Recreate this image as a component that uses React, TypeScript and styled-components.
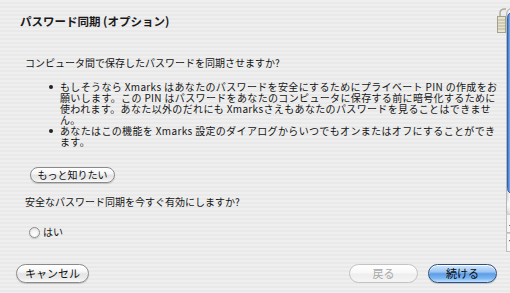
import React from "react";
import styled, { createGlobalStyle, css } from "styled-components";

const FONT = `"Noto Sans CJK JP", "Noto Sans", sans-serif`;

const Global = createGlobalStyle`
  html, body { margin: 0; padding: 0; height: 100%; }
  body {
    background: repeating-linear-gradient(to bottom, #efefef 0px, #efefef 2px, #e9e9e9 2px, #e9e9e9 4px);
    font-family: ${FONT};
    color: #151515;
  }
  #root { height: 100%; }
`;

const Window = styled.div`
  width: 510px;
  height: 293px;
  display: flex;
  flex-direction: column;
`;

const Body = styled.div`
  height: 252px;
  display: flex;
  padding-right: 22px;
`;

const Content = styled.div`
  flex: 1;
  display: flex;
  flex-direction: column;
  align-items: flex-start;
  padding: 14px 0 0 20px;
`;

const Title = styled.h1`
  margin: 0;
  font-size: 11.5px;
  line-height: 14px;
  font-weight: 700;
  color: #1a1a1a;
  white-space: nowrap;
`;

const Paragraph = styled.p<{ $top: number }>`
  margin: ${(p) => p.$top}px 0 0 5px;
  font-size: 10px;
  line-height: 11px;
  white-space: nowrap;
`;

const BulletList = styled.ul`
  list-style: none;
  margin: 13px 0 0 28px;
  padding: 0;
  display: flex;
  flex-direction: column;
`;

const BulletItem = styled.li`
  display: flex;
  font-size: 10px;
  line-height: 11px;
`;

const Dot = styled.span`
  width: 12px;
  flex: none;
  display: flex;
  justify-content: flex-start;
  padding-left: 1px;
  padding-top: 4px;
  box-sizing: border-box;
  &::after {
    content: "";
    width: 4px;
    height: 4px;
    border-radius: 50%;
    background: #222;
  }
`;

const BulletText = styled.span`
  white-space: nowrap;
  letter-spacing: 0.35px;
`;

type Variant = "normal" | "primary" | "disabled";

const PillButton = styled.button<{ $variant?: Variant; $w: number; $h: number; $size: number }>`
  width: ${(p) => p.$w}px;
  height: ${(p) => p.$h}px;
  border-radius: ${(p) => p.$h / 2}px;
  font-family: ${FONT};
  font-size: ${(p) => p.$size}px;
  line-height: 1;
  padding: 0;
  display: flex;
  align-items: center;
  justify-content: center;
  color: #111;
  border: 1px solid #8a8a8a;
  background: linear-gradient(to bottom, #ffffff 0%, #f6f6f6 40%, #e4e4e4 52%, #ececec 80%, #fbfbfb 100%);
  box-shadow: 0 1px 1px rgba(0, 0, 0, 0.18), inset 0 1px 0 rgba(255, 255, 255, 0.9);
  ${(p) =>
    p.$variant === "primary" &&
    css`
      border-color: #2f4f80;
      background: linear-gradient(to bottom, #d4e8fd 0%, #9cc6f3 40%, #5d9de8 52%, #7ab5f1 78%, #c4e1ff 100%);
      color: #0d0d0d;
    `}
  ${(p) =>
    p.$variant === "disabled" &&
    css`
      border-color: #c3c3c3;
      color: #a9a9a9;
      background: linear-gradient(to bottom, #ffffff 0%, #f8f8f8 45%, #eeeeee 55%, #f5f5f5 100%);
      box-shadow: none;
    `}
`;

const SmallButton = styled(PillButton)`
  margin: 20px 0 0 10px;
`;

const RadioRow = styled.label`
  margin: 19px 0 0 9px;
  display: flex;
  align-items: center;
  gap: 3px;
  font-size: 10px;
  line-height: 12px;
`;

const RadioCircle = styled.span`
  width: 11px;
  height: 11px;
  border-radius: 50%;
  border: 1px solid #8e8e8e;
  box-sizing: border-box;
  background: radial-gradient(circle at 50% 70%, #ffffff 0%, #f2f2f2 50%, #d8d8d8 100%);
  box-shadow: 0 1px 1px rgba(0, 0, 0, 0.15);
`;

const Grip = styled.div`
  width: 9px;
  margin-top: 8px;
  display: flex;
  align-items: flex-start;
`;

const Scrollbar = styled.div`
  width: 12px;
  margin-top: 8px;
  display: flex;
  flex-direction: column;
`;

const Track = styled.div`
  flex: 1;
  display: flex;
  flex-direction: column;
  align-items: center;
  background: linear-gradient(to right, #d6d6d6 0%, #f6f6f6 25%, #ffffff 50%, #f6f6f6 75%, #d6d6d6 100%);
  border: 1px solid #b9b9b9;
  border-bottom: none;
  border-radius: 6px 6px 0 0;
  box-sizing: border-box;
  padding-top: 3px;
`;

const Thumb = styled.div`
  width: 11px;
  height: 182px;
  border-radius: 6px;
  border: 1px solid #2f63b0;
  box-sizing: border-box;
  background: linear-gradient(to right, #3b78cf 0%, #7fb2ef 22%, #b3d6fb 45%, #a6cdf8 60%, #6fa6ea 80%, #3a76cd 100%);
`;

const TrackEnd = styled.div`
  margin-top: auto;
  width: 10px;
  height: 16px;
  border-radius: 0 0 5px 5px;
  background: linear-gradient(to bottom, rgba(255, 255, 255, 0) 0%, #fafafa 40%, #e0e0e0 100%);
  box-shadow: 0 1px 1px rgba(0, 0, 0, 0.12);
`;

const ArrowButton = styled.div`
  height: 19px;
  border: 1px solid #bdbdbd;
  border-top-color: #cfcfcf;
  box-sizing: border-box;
  background: linear-gradient(to right, #f2f2f2, #ffffff 50%, #f2f2f2);
  display: flex;
  align-items: center;
  justify-content: center;
`;

const Footer = styled.div`
  flex: 1;
  display: flex;
  align-items: flex-start;
  padding: 12px 13px 0 16px;
  gap: 10px;
`;

const Spacer = styled.div`
  flex: 1;
`;

const Triangle = ({ up }: { up: boolean }) => (
  <svg width="6" height="5" viewBox="0 0 6 5">
    <polygon points={up ? "3,0 6,5 0,5" : "0,0 6,0 3,5"} fill="#3a3a3a" />
  </svg>
);

const GripIcon = () => (
  <svg width="9" height="26" viewBox="0 0 9 26">
    <path d="M3 8 V5 Q3 1.5 7 1 L9 1" fill="none" stroke="#a9a99a" strokeWidth="1.4" />
    <rect x="0.5" y="8.5" width="8" height="16" fill="#e7e3cc" stroke="#a4a28e" />
    <line x1="1" y1="12" x2="8" y2="12" stroke="#b9b59c" />
    <line x1="1" y1="15" x2="8" y2="15" stroke="#b9b59c" />
    <line x1="1" y1="18" x2="8" y2="18" stroke="#b9b59c" />
    <line x1="1" y1="21" x2="8" y2="21" stroke="#b9b59c" />
  </svg>
);

export default function App() {
  return (
    <>
      <Global />
      <Window>
        <Body>
          <Content>
            <Title>パスワード同期 (オプション)</Title>
            <Paragraph $top={29}>コンピュータ間で保存したパスワードを同期させますか?</Paragraph>
            <BulletList>
              <BulletItem>
                <Dot />
                <BulletText>
                  もしそうなら Xmarks はあなたのパスワードを安全にするためにプライベート PIN の作成をお
                  <br />
                  願いします。この PIN はパスワードをあなたのコンピュータに保存する前に暗号化するために
                  <br />
                  使われます。あなた以外のだれにも Xmarksさえもあなたのパスワードを見ることはできませ
                  <br />
                  ん。
                </BulletText>
              </BulletItem>
              <BulletItem>
                <Dot />
                <BulletText>
                  あなたはこの機能を Xmarks 設定のダイアログからいつでもオンまたはオフにすることができ
                  <br />
                  ます。
                </BulletText>
              </BulletItem>
            </BulletList>
            <SmallButton $w={85} $h={16} $size={10}>
              もっと知りたい
            </SmallButton>
            <Paragraph $top={13}>安全なパスワード同期を今すぐ有効にしますか?</Paragraph>
            <RadioRow>
              <RadioCircle />
              はい
            </RadioRow>
          </Content>
          <Grip>
            <GripIcon />
          </Grip>
          <Scrollbar>
            <Track>
              <Thumb />
              <TrackEnd />
            </Track>
            <ArrowButton>
              <Triangle up />
            </ArrowButton>
            <ArrowButton>
              <Triangle up={false} />
            </ArrowButton>
          </Scrollbar>
        </Body>
        <Footer>
          <PillButton $w={73} $h={19} $size={11}>
            キャンセル
          </PillButton>
          <Spacer />
          <PillButton $variant="disabled" $w={69} $h={19} $size={11}>
            戻る
          </PillButton>
          <PillButton $variant="primary" $w={69} $h={19} $size={11}>
            続ける
          </PillButton>
        </Footer>
      </Window>
    </>
  );
}
